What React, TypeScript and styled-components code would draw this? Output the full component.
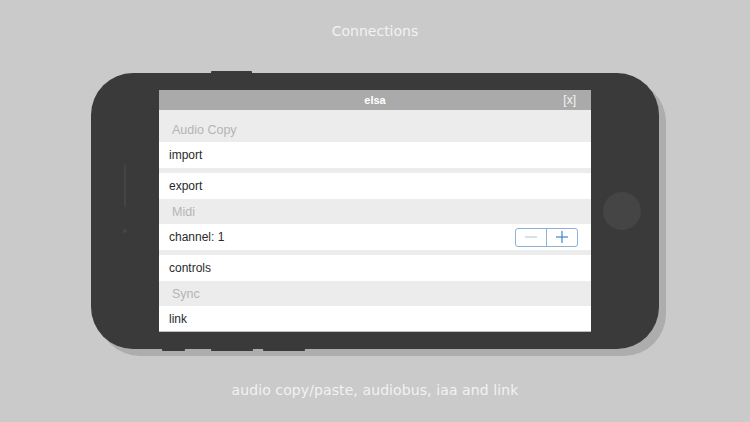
import React from 'react';
import styled, { createGlobalStyle } from 'styled-components';

const GlobalStyle = createGlobalStyle`
  html, body {
    margin: 0;
    padding: 0;
    background: #cacaca;
  }
  body {
    width: 750px;
    height: 422px;
    overflow: hidden;
    font-family: "DejaVu Sans", Verdana, sans-serif;
  }
`;

const Page = styled.div`
  width: 750px;
  height: 422px;
  display: flex;
  flex-direction: column;
  align-items: center;
`;

const Title = styled.div`
  margin-top: 22px;
  height: 18px;
  line-height: 18px;
  font-size: 14px;
  color: #f2f2f2;
`;

const Caption = styled.div`
  margin-top: 32px;
  height: 18px;
  line-height: 18px;
  font-size: 14px;
  color: #f2f2f2;
  letter-spacing: 0.1px;
`;

const Phone = styled.div`
  position: relative;
  margin-top: 33px;
  width: 568px;
  height: 276px;
  box-sizing: border-box;
  display: flex;
  background: #3a3a3a;
  border-radius: 42px;
  box-shadow: 7px 7px 0 #adadad;
`;

const SideButton = styled.div<{ $left: number; $width: number; $bottom?: boolean }>`
  position: absolute;
  left: ${({ $left }) => $left}px;
  width: ${({ $width }) => $width}px;
  height: 3px;
  background: #3a3a3a;
  border-radius: 1px;
  ${({ $bottom }) => ($bottom ? 'bottom: -2px;' : 'top: -2px;')}
`;

const Bezel = styled.div<{ $side: 'left' | 'right' }>`
  width: 68px;
  flex: none;
  display: flex;
  flex-direction: column;
  align-items: center;
  padding-right: ${({ $side }) => ($side === 'right' ? '6px' : '0')};
  box-sizing: border-box;
  justify-content: center;
`;

const Speaker = styled.div`
  width: 2px;
  height: 43px;
  margin-top: -26px;
  background: #444444;
  border-radius: 1px;
`;

const Sensor = styled.div`
  width: 4px;
  height: 4px;
  margin-top: 22px;
  border-radius: 50%;
  background: #464646;
`;

const HomeButton = styled.div`
  width: 38px;
  height: 38px;
  border-radius: 50%;
  background: #454545;
`;

const Screen = styled.div`
  margin: 17px 0;
  flex: 1;
  display: flex;
  flex-direction: column;
  background: #ececec;
  font-family: "Liberation Sans", Arial, sans-serif;
  overflow: hidden;
  border-bottom: 1px solid #bdbdbd;
`;

const Header = styled.div`
  position: relative;
  height: 20px;
  flex: none;
  display: flex;
  align-items: center;
  justify-content: center;
  background: #aaaaaa;
  color: #ffffff;
  font-size: 11px;
  font-weight: bold;
`;

const Close = styled.span`
  position: absolute;
  right: 15px;
  top: 3px;
  font-size: 12px;
  font-weight: normal;
  color: #f4f4f4;
`;

const Section = styled.div<{ $tall?: boolean }>`
  height: ${({ $tall }) => ($tall ? 32 : 25)}px;
  flex: none;
  display: flex;
  align-items: ${({ $tall }) => ($tall ? 'flex-end' : 'center')};
  padding: 0 0 ${({ $tall }) => ($tall ? 5 : 0)}px 13px;
  box-sizing: border-box;
  font-size: 12.5px;
  color: #b4b4b4;
`;

const Row = styled.div<{ $gap?: boolean }>`
  height: 26px;
  flex: none;
  display: flex;
  align-items: center;
  justify-content: space-between;
  padding: 0 13px 0 10px;
  background: #ffffff;
  font-size: 12px;
  color: #2a2a2a;
  margin-bottom: ${({ $gap }) => ($gap ? 5 : 0)}px;
`;

const Stepper = styled.div`
  display: flex;
  height: 19px;
  box-sizing: border-box;
  border: 1px solid #8db2d6;
  border-radius: 3px;
`;

const StepButton = styled.div<{ $muted?: boolean }>`
  width: 30px;
  display: flex;
  align-items: center;
  justify-content: center;
  color: ${({ $muted }) => ($muted ? '#a9c1d9' : '#3f86cc')};
  & + & {
    border-left: 1px solid #8db2d6;
  }
`;

const Minus = () => (
  <svg width="12" height="12" viewBox="0 0 12 12">
    <line x1="0" y1="6" x2="12" y2="6" stroke="currentColor" strokeWidth="1" />
  </svg>
);

const Plus = () => (
  <svg width="12" height="12" viewBox="0 0 12 12">
    <line x1="0" y1="6" x2="12" y2="6" stroke="currentColor" strokeWidth="1.2" />
    <line x1="6" y1="0" x2="6" y2="12" stroke="currentColor" strokeWidth="1.2" />
  </svg>
);

export default function App() {
  return (
    <>
      <GlobalStyle />
      <Page>
        <Title>Connections</Title>
        <Phone>
          <SideButton $left={120} $width={41} />
          <SideButton $bottom $left={71} $width={23} />
          <SideButton $bottom $left={120} $width={42} />
          <SideButton $bottom $left={172} $width={42} />
          <Bezel $side="left">
            <Speaker />
            <Sensor />
          </Bezel>
          <Screen>
            <Header>
              elsa
              <Close>[x]</Close>
            </Header>
            <Section $tall>Audio Copy</Section>
            <Row $gap>import</Row>
            <Row>export</Row>
            <Section>Midi</Section>
            <Row $gap>
              <span>channel: 1</span>
              <Stepper>
                <StepButton $muted>
                  <Minus />
                </StepButton>
                <StepButton>
                  <Plus />
                </StepButton>
              </Stepper>
            </Row>
            <Row>controls</Row>
            <Section>Sync</Section>
            <Row>link</Row>
          </Screen>
          <Bezel $side="right">
            <HomeButton />
          </Bezel>
        </Phone>
        <Caption>audio copy/paste, audiobus, iaa and link</Caption>
      </Page>
    </>
  );
}
